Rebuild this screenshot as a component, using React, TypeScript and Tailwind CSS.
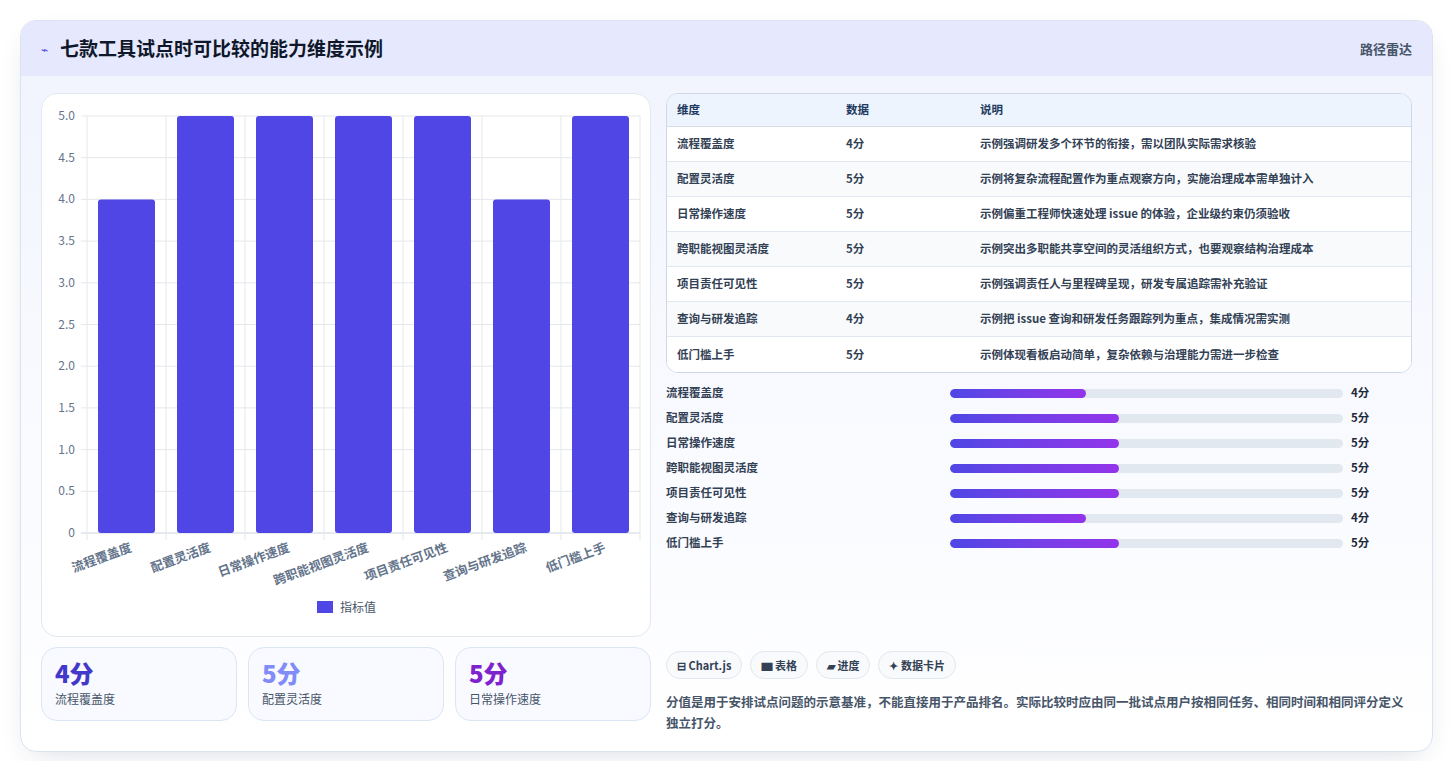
const rows = [
  { name: "流程覆盖度", v: 4, note: "示例强调研发多个环节的衔接，需以团队实际需求核验" },
  { name: "配置灵活度", v: 5, note: "示例将复杂流程配置作为重点观察方向，实施治理成本需单独计入" },
  { name: "日常操作速度", v: 5, note: "示例偏重工程师快速处理 issue 的体验，企业级约束仍须验收" },
  { name: "跨职能视图灵活度", v: 5, note: "示例突出多职能共享空间的灵活组织方式，也要观察结构治理成本" },
  { name: "项目责任可见性", v: 5, note: "示例强调责任人与里程碑呈现，研发专属追踪需补充验证" },
  { name: "查询与研发追踪", v: 4, note: "示例把 issue 查询和研发任务跟踪列为重点，集成情况需实测" },
  { name: "低门槛上手", v: 5, note: "示例体现看板启动简单，复杂依赖与治理能力需进一步检查" },
];

const font = { fontFamily: '"Noto Sans CJK SC", "Noto Sans", sans-serif' };

function Chart() {
  const x0 = 45, x1 = 598, yTop = 22, yBot = 439;
  const step = (x1 - x0) / 7;
  const ticks = [0, 0.5, 1, 1.5, 2, 2.5, 3, 3.5, 4, 4.5, 5];
  const y = (v: number) => yBot - (v / 5) * (yBot - yTop);
  return (
    <svg width="610" height="543" className="block">
      {ticks.map((t) => (
        <g key={t}>
          <line x1={x0 - 6} x2={x1} y1={y(t)} y2={y(t)} stroke={t === 0 ? "#cbd5e1" : "#e5e7eb"} />
          <text x={x0 - 12} y={y(t) + 4} textAnchor="end" fontSize="12" fill="#64748b">
            {t === 0 ? "0" : t.toFixed(1)}
          </text>
        </g>
      ))}
      {Array.from({ length: 8 }).map((_, i) => (
        <line key={i} x1={x0 + i * step} x2={x0 + i * step} y1={yTop} y2={yBot + 7} stroke="#e5e7eb" />
      ))}
      {rows.map((r, i) => (
        <g key={r.name}>
          <rect x={x0 + i * step + 11} y={y(r.v)} width={step - 22} height={yBot - y(r.v)} rx="3" fill="#4f46e5" />
          <text
            transform={`translate(${x0 + i * step + step / 2 + 6},${yBot + 18}) rotate(-20)`}
            textAnchor="end"
            fontSize="12.5"
            fontWeight="700"
            fill="#64748b"
          >
            {r.name}
          </text>
        </g>
      ))}
      <rect x="275" y="507" width="16" height="12" fill="#4f46e5" />
      <text x="298" y="518" fontSize="12" fill="#475569">指标值</text>
    </svg>
  );
}

export default function App() {
  return (
    <div className="min-h-screen bg-white p-5" style={font}>
      <div className="rounded-2xl border border-[#dbe3f0] bg-gradient-to-b from-[#f1f4fe] to-white shadow-[0_10px_30px_-12px_rgba(30,41,80,0.2)] overflow-hidden">
        <div className="flex items-center justify-between h-[55px] px-5 bg-[#e6e9fd]">
          <div className="flex items-center gap-3">
            <span className="text-[#4f46e5] text-xs">⌁</span>
            <h1 className="text-[19px] font-bold text-[#0f172a]">七款工具试点时可比较的能力维度示例</h1>
          </div>
          <span className="text-[13px] font-semibold text-[#475569]">路径雷达</span>
        </div>
        <div className="flex gap-[15px] px-5 pt-[17px] pb-[18px]">
          <div className="w-[610px] flex flex-col gap-[10px]">
            <div className="rounded-2xl border border-[#e2e8f0] bg-white h-[544px] overflow-hidden">
              <Chart />
            </div>
            <div className="grid grid-cols-3 gap-[11px]">
              {[
                ["4分", "流程覆盖度", "text-[#4338ca]"],
                ["5分", "配置灵活度", "text-[#818cf8]"],
                ["5分", "日常操作速度", "text-[#7e22ce]"],
              ].map(([v, l, c]) => (
                <div key={l} className="rounded-2xl border border-[#dbe6f5] bg-[#f8faff] h-[74px] px-[13px] pt-[10px]">
                  <div className={`text-[24px] font-extrabold leading-[30px] ${c}`}>{v}</div>
                  <div className="text-[12px] text-[#475569] mt-0.5">{l}</div>
                </div>
              ))}
            </div>
          </div>
          <div className="w-[748px] flex flex-col">
            <div className="rounded-xl border border-[#cfd8e6] overflow-hidden bg-white">
              <div className="flex h-[33px] items-center bg-[#eef4fd] border-b border-[#d5deea] text-[11.5px] font-bold text-[#1e3a5f]">
                <div className="w-[179px] pl-[10px]">维度</div>
                <div className="w-[134px]">数据</div>
                <div>说明</div>
              </div>
              {rows.map((r, i) => (
                <div
                  key={r.name}
                  className={`flex h-[35px] items-center text-[11.5px] font-semibold text-[#334155] ${i % 2 ? "bg-[#f8fafc]" : "bg-white"} ${i < 6 ? "border-b border-[#e2e8f0]" : ""}`}
                >
                  <div className="w-[179px] pl-[10px]">{r.name}</div>
                  <div className="w-[134px]">{r.v}分</div>
                  <div>{r.note}</div>
                </div>
              ))}
            </div>
            <div className="flex flex-col gap-[9px] mt-[12px]">
              {rows.map((r) => (
                <div key={r.name} className="flex items-center h-[16px] text-[11.5px] font-semibold text-[#334155]">
                  <div className="w-[284px]">{r.name}</div>
                  <div className="w-[393px] h-[9px] rounded-full bg-[#e2e8f0] overflow-hidden">
                    <div
                      className="h-full rounded-full bg-gradient-to-r from-[#4f46e5] to-[#9333ea]"
                      style={{ width: `${r.v === 5 ? 43 : 34.5}%` }}
                    />
                  </div>
                  <div className="ml-2 font-bold text-[#1e293b]">{r.v}分</div>
                </div>
              ))}
            </div>
            <div className="flex gap-2 mt-[100px]">
              {["⊟ Chart.js", "▆ 表格", "▰ 进度", "✦ 数据卡片"].map((c) => (
                <span key={c} className="rounded-full border border-[#e2e8f0] bg-[#f8fafc] px-[10px] h-[28px] flex items-center text-[11px] font-bold text-[#334155]">
                  {c}
                </span>
              ))}
            </div>
            <p className="mt-[12px] text-[12.5px] leading-[21px] font-semibold text-[#475569]">
              分值是用于安排试点问题的示意基准，不能直接用于产品排名。实际比较时应由同一批试点用户按相同任务、相同时间和相同评分定义独立打分。
            </p>
          </div>
        </div>
      </div>
    </div>
  );
}
